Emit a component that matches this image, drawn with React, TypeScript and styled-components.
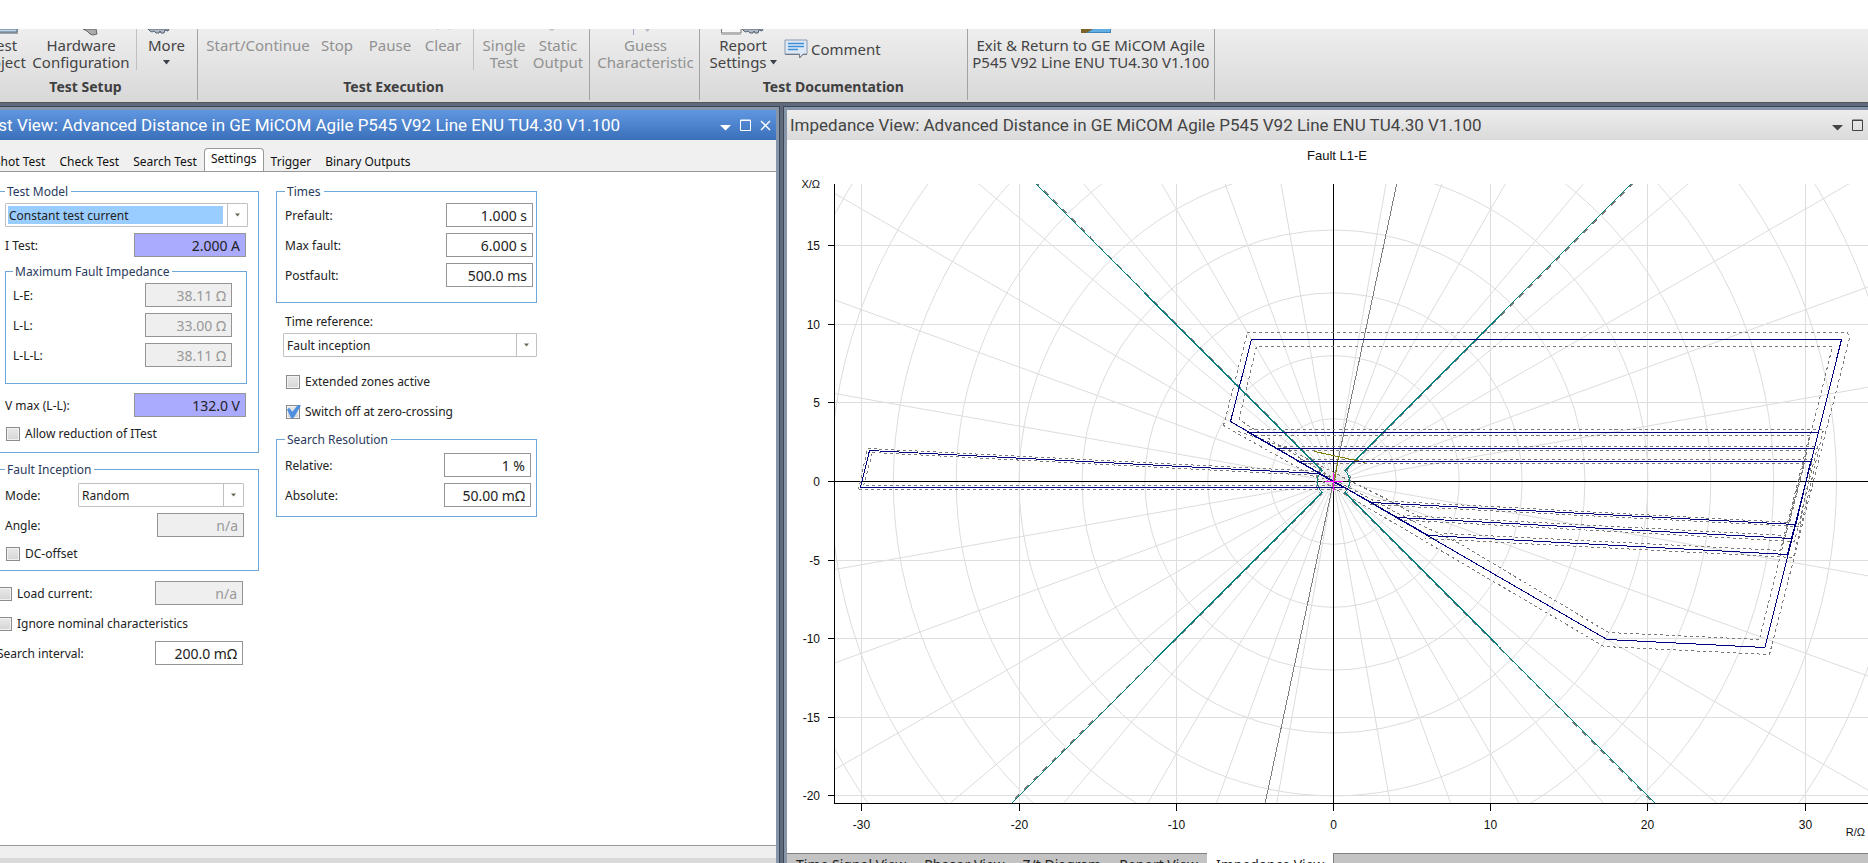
import React from "react";
import styled, { createGlobalStyle, css } from "styled-components";

const UI = `"Noto Sans", "Open Sans", sans-serif`;
const PLOT = `"Liberation Sans", Arial, sans-serif`;

const GlobalStyle = createGlobalStyle`
  *, *::before, *::after { box-sizing: border-box; }
  html, body { margin: 0; background: #fff; }
  body { overflow: hidden; font-family: ${UI}; color: #222; }
  button, input, select { font-family: inherit; color: inherit; margin: 0; }
`;

const Page = styled.div`
  display: flex;
  flex-direction: column;
  height: 100vh;
  padding-top: 29px;
  overflow: hidden;
`;

/* ---------- ribbon ---------- */

const Ribbon = styled.header`
  display: flex;
  flex: none;
  height: 74px;
  background: linear-gradient(#eeeeee, #d8d8d8);
  border-bottom: 1px solid #555555;
  overflow: hidden;
`;

const Group = styled.section<{ $shift?: number }>`
  display: flex;
  flex: none;
  flex-direction: column;
  height: 71px;
  margin-left: ${(p) => p.$shift ?? 0}px;
  border-right: 1px solid #a2a2a2;
`;

const GroupItems = styled.div<{ $pad?: string }>`
  display: flex;
  height: 42px;
  padding: ${(p) => p.$pad ?? "0"};
`;

const GroupTitle = styled.h2`
  margin: 6px 0 0;
  font-size: 14px;
  line-height: 20px;
  font-weight: 700;
  text-align: center;
  color: #404040;
`;

const Tool = styled.button<{ $w: number }>`
  display: flex;
  flex: none;
  flex-direction: column;
  align-items: center;
  width: ${(p) => p.$w}px;
  padding: 0;
  border: 0;
  background: none;
  font-size: 15px;
  line-height: 17px;
  white-space: nowrap;
  color: #444;
  &:disabled { color: #919191; }
`;

const ToolIcon = styled.svg`
  display: block;
  flex: none;
  width: 44px;
  height: 8px;
`;

const ToolLine = styled.span`
  display: flex;
  align-items: center;
  gap: 3px;
  height: 17px;
`;

const CommentTool = styled.button`
  display: flex;
  align-self: flex-start;
  align-items: center;
  gap: 3px;
  height: 20px;
  margin: 10px 0 0 8px;
  padding: 0;
  border: 0;
  background: none;
  font-size: 15px;
  line-height: 18px;
  color: #444;
`;

const Separator = styled.span`
  flex: none;
  width: 1px;
  height: 41px;
  margin: 0 2px 0 6px;
  background: #c0c0c0;
`;

const Caret = () => (
  <svg width="7" height="5" viewBox="0 0 7 5">
    <path d="M0 0H7L3.5 4.5Z" fill="#3a3f4c" />
  </svg>
);

/* ---------- panels ---------- */

const Workspace = styled.main`
  display: grid;
  flex: 1;
  min-height: 0;
  grid-template-columns: minmax(0, 780fr) minmax(0, 1085fr);
  gap: 3px;
  padding-top: 3px;
  background: #5f6b7d;
`;

const Panel = styled.section<{ $side: "left" | "right" }>`
  display: flex;
  flex-direction: column;
  min-width: 0;
  min-height: 0;
  border-top: 1px solid #3c4657;
  ${(p) =>
    p.$side === "left"
      ? css`
          border-right: 1px solid #3c4657;
          padding: 3px 3px 0 0;
        `
      : css`
          border-left: 1px solid #3c4657;
          padding: 3px 0 0 3px;
        `}
  background: #8795a9;
`;

const TitleBar = styled.div<{ $active?: boolean }>`
  display: flex;
  flex: none;
  align-items: center;
  justify-content: space-between;
  height: 30px;
  overflow: hidden;
  color: ${(p) => (p.$active ? "#fff" : "#444")};
  background: ${(p) =>
    p.$active ? "linear-gradient(#6197e1, #3a70b9)" : "linear-gradient(#ededed, #dadada)"};
`;

const Title = styled.h1<{ $start: number }>`
  flex: none;
  margin: 0 0 0 ${(p) => p.$start}px;
  font-family: Roboto, "Open Sans", sans-serif;
  font-size: 17px;
  line-height: 32px;
  font-weight: 400;
  white-space: nowrap;
`;

const WindowButtons = styled.div<{ $end: number }>`
  display: flex;
  gap: 7px;
  padding-right: ${(p) => p.$end}px;
`;

const WindowButton = styled.button`
  display: flex;
  width: 13px;
  padding: 0;
  border: 0;
  background: none;
`;

const MenuGlyph = () => (
  <svg width="13" height="13" viewBox="0 0 13 13">
    <path d="M1 6H12L6.500 11.500Z" fill="currentColor" />
  </svg>
);
const MaximizeGlyph = () => (
  <svg width="13" height="13" viewBox="0 0 13 13">
    <path d="M1.500 1H11.500V11.500H1.500Z" fill="none" stroke="currentColor" />
    <path d="M1 1.500H12" stroke="currentColor" />
  </svg>
);
const CloseGlyph = () => (
  <svg width="13" height="13" viewBox="0 0 13 13">
    <path d="M2 2L11 11M11 2L2 11" stroke="currentColor" strokeWidth="1.400" />
  </svg>
);

/* ---------- test view ---------- */

const TabStrip = styled.nav`
  display: flex;
  flex: none;
  align-items: flex-end;
  height: 32px;
  overflow: hidden;
  background: #f0f0f0;
  border-bottom: 1px solid #999;
`;

const Tab = styled.button<{ $selected?: boolean; $shift?: number }>`
  flex: none;
  height: ${(p) => (p.$selected ? 24 : 20)}px;
  margin: 0 0 ${(p) => (p.$selected ? -1 : 0)}px ${(p) => p.$shift ?? 0}px;
  padding: 0 6px ${(p) => (p.$selected ? 3 : 0)}px;
  border: 1px solid ${(p) => (p.$selected ? "#999" : "transparent")};
  border-bottom: 0;
  border-radius: 4px 4px 0 0;
  background: ${(p) => (p.$selected ? "#fff" : "none")};
  font-size: 12px;
  line-height: 18px;
  white-space: nowrap;
  color: #111;
`;

const Form = styled.form`
  display: flex;
  flex: 1;
  min-height: 0;
  align-items: flex-start;
  gap: 17px;
  padding-top: 11px;
  overflow: hidden;
  background: #fff;
  font-size: 12px;
  line-height: 16px;
`;

const Column = styled.div<{ $w: number; $shift?: number }>`
  flex: none;
  width: ${(p) => p.$w}px;
  margin-left: ${(p) => p.$shift ?? 0}px;
`;

const Box = styled.fieldset<{ $pad: string; $top?: number; $end?: number }>`
  display: flex;
  flex-direction: column;
  gap: 6px;
  min-width: 0;
  margin: ${(p) => p.$top ?? 0}px ${(p) => p.$end ?? 0}px 0 0;
  padding: ${(p) => p.$pad};
  border: 1px solid #6fa8d8;
`;

const Legend = styled.legend`
  height: 16px;
  padding: 1px 3px 0 2px;
  color: #2a3a5c;
`;

const Stack = styled.div<{ $pad: string }>`
  display: flex;
  flex-direction: column;
  gap: 6px;
  padding: ${(p) => p.$pad};
`;

const Row = styled.div<{ $end?: number; $top?: number; $h?: number }>`
  display: flex;
  flex: none;
  align-items: center;
  justify-content: space-between;
  height: ${(p) => p.$h ?? 24}px;
  margin-top: ${(p) => p.$top ?? 0}px;
  padding-right: ${(p) => p.$end ?? 0}px;
  white-space: nowrap;
  label { padding-top: 1px; }
`;

const Value = styled.input<{ $w?: number; $hot?: boolean }>`
  width: ${(p) => p.$w ?? 87}px;
  height: 24px;
  padding: 0 5px;
  border: 1px solid #959595;
  border-radius: 0;
  background: ${(p) => (p.$hot ? "#aaaaff" : "#fff")};
  font-size: 14px;
  text-align: right;
  &:disabled { background: #efefef; color: #999; opacity: 1; }
`;

const Check = styled.label`
  display: flex;
  align-items: center;
  gap: 5px;
  padding-left: 1px;
`;

const Tick = styled.input`
  appearance: none;
  display: grid;
  width: 14px;
  height: 14px;
  border: 1px solid #8c8c8c;
  background: linear-gradient(#e9e9e9, #d5d5d5);
  box-shadow: inset 0 0 0 1px #f2f2f2;
  &:checked::after {
    content: "";
    width: 14px;
    height: 14px;
    margin-top: -1px;
    background: #4f8fe0;
    clip-path: polygon(0 36%, 16% 24%, 38% 52%, 80% 0, 100% 8%, 46% 98%, 30% 98%);
  }
`;

const Picker = styled.span<{ $w: string }>`
  display: grid;
  grid-template-columns: minmax(0, 1fr) 21px;
  width: ${(p) => p.$w};
  height: 24px;
`;

const PickerField = styled.select<{ $lit?: boolean }>`
  appearance: none;
  grid-area: 1 / 1 / 2 / 3;
  height: 24px;
  padding: 0 24px 0 3px;
  border: 1px solid #c0c0c0;
  border-radius: 1px;
  background: ${(p) =>
    p.$lit
      ? "linear-gradient(#99ccff, #99ccff) 2px 2px / calc(100% - 26px) 18px no-repeat #fff"
      : "#fff"};
  font-size: 12px;
  color: #222;
`;

const PickerArrow = styled.svg`
  grid-area: 1 / 2 / 2 / 3;
  width: 21px;
  height: 24px;
  pointer-events: none;
`;

const FooterBar = styled.div`
  flex: none;
  height: 18px;
  border-top: 1px solid #999;
  background: linear-gradient(#efefef 12px, #dadada 12px);
`;

function ValueRow(p: {
  id: string; label: string; value: string; end?: number; top?: number;
  width?: number; hot?: boolean; off?: boolean;
}) {
  return (
    <Row $end={p.end} $top={p.top}>
      <label htmlFor={p.id}>{p.label}</label>
      <Value id={p.id} defaultValue={p.value} disabled={p.off} $w={p.width} $hot={p.hot} />
    </Row>
  );
}

function Choice(p: { id: string; value: string; width: string; lit?: boolean }) {
  return (
    <Picker $w={p.width}>
      <PickerField id={p.id} $lit={p.lit} aria-label={p.value}>
        <option>{p.value}</option>
      </PickerField>
      <PickerArrow viewBox="0 0 21 24">
        <path d="M0.500 0V24" stroke="#c0c0c0" />
        <path d="M8 10.500H13L10.500 13.500Z" fill="#6b6654" />
      </PickerArrow>
    </Picker>
  );
}

function TestView() {
  return (
    <Panel $side="left">
      <TitleBar $active>
        <Title $start={-20}>
          Test View: Advanced Distance in GE MiCOM Agile P545 V92 Line ENU TU4.30 V1.100
        </Title>
        <WindowButtons $end={4}>
          <WindowButton aria-label="Menu"><MenuGlyph /></WindowButton>
          <WindowButton aria-label="Maximize"><MaximizeGlyph /></WindowButton>
          <WindowButton aria-label="Close"><CloseGlyph /></WindowButton>
        </WindowButtons>
      </TitleBar>
      <TabStrip>
        <Tab $shift={-13}>Shot Test</Tab>
        <Tab>Check Test</Tab>
        <Tab>Search Test</Tab>
        <Tab $selected>Settings</Tab>
        <Tab>Trigger</Tab>
        <Tab>Binary Outputs</Tab>
      </TabStrip>
      <Form>
        <Column $w={267} $shift={-8}>
          <Box $pad="4px 10px 9px 12px">
            <Legend>Test Model</Legend>
            <Choice id="model" value="Constant test current" width="100%" lit />
            <ValueRow id="itest" label="I Test:" value="2.000 A" width={112} end={2} hot />
            <Box $pad="4px 14px 16px 7px" $end={1}>
              <Legend>Maximum Fault Impedance</Legend>
              <ValueRow id="le" label="L-E:" value="38.11 Ω" off />
              <ValueRow id="ll" label="L-L:" value="33.00 Ω" off />
              <ValueRow id="lll" label="L-L-L:" value="38.11 Ω" off />
            </Box>
            <ValueRow id="vmax" label="V max (L-L):" value="132.0 V" width={112} end={2} top={3} hot />
            <Row $h={20}>
              <Check><Tick type="checkbox" />Allow reduction of ITest</Check>
            </Row>
          </Box>
          <Box $pad="6px 14px 7px 12px" $top={8}>
            <Legend>Fault Inception</Legend>
            <Row>
              <label htmlFor="mode">Mode:</label>
              <Choice id="mode" value="Random" width="166px" />
            </Row>
            <ValueRow id="angle" label="Angle:" value="n/a" off />
            <Row $h={20}>
              <Check><Tick type="checkbox" />DC-offset</Check>
            </Row>
          </Box>
          <Stack $pad="10px 16px 0 5px">
            <Row>
              <Check><Tick type="checkbox" />Load current:</Check>
              <Value aria-label="Load current" defaultValue="n/a" disabled $w={88} />
            </Row>
            <Row>
              <Check><Tick type="checkbox" />Ignore nominal characteristics</Check>
            </Row>
            <ValueRow id="interval" label="Search interval:" value="200.0 mΩ" width={88} />
          </Stack>
        </Column>
        <Column $w={261}>
          <Box $pad="4px 3px 15px 8px">
            <Legend>Times</Legend>
            <ValueRow id="pre" label="Prefault:" value="1.000 s" />
            <ValueRow id="max" label="Max fault:" value="6.000 s" />
            <ValueRow id="post" label="Postfault:" value="500.0 ms" />
          </Box>
          <Stack $pad="11px 0 0 9px">
            <label htmlFor="ref">Time reference:</label>
          </Stack>
          <Stack $pad="3px 0 0 7px">
            <Choice id="ref" value="Fault inception" width="100%" />
          </Stack>
          <Stack $pad="12px 0 0 9px">
            <Row>
              <Check><Tick type="checkbox" />Extended zones active</Check>
            </Row>
            <Row>
              <Check><Tick type="checkbox" defaultChecked />Switch off at zero-crossing</Check>
            </Row>
          </Stack>
          <Box $pad="6px 5px 9px 8px" $top={8}>
            <Legend>Search Resolution</Legend>
            <ValueRow id="rel" label="Relative:" value="1 %" />
            <ValueRow id="abs" label="Absolute:" value="50.00 mΩ" />
          </Box>
        </Column>
      </Form>
      <FooterBar />
    </Panel>
  );
}

/* ---------- impedance plot ---------- */

const PlotArea = styled.div`
  display: flex;
  flex: 1;
  min-height: 0;
  overflow: hidden;
  background: #fff;
`;

const PlotSvg = styled.svg`
  flex: 1;
  min-width: 0;
  height: 100%;
  font-family: ${PLOT};
  font-size: 12px;
  fill: none;
  text { fill: #111; stroke: none; }
`;

const Crisp = styled.g`
  shape-rendering: crispEdges;
`;

const Dashed = styled.g`
  stroke: #7a7a7a;
  stroke-dasharray: 3 3;
`;

/* Origin of the R/X plane and pixels per ohm, in plot coordinates. */
const OX = 546.5;
const OY = 341.5;
const S = 15.72;
const px = (r: number) => Math.floor(OX + r * S) + 0.5;
const py = (x: number) => Math.floor(OY - x * S) + 0.5;
const LEFT = 47.5;
const TOP = 44;
const BOTTOM = 663.5;

const rays = Array.from({ length: 36 }, (_, i) => (i * 10 * Math.PI) / 180);
const rings = [4, 8, 12, 16, 20, 24, 28, 32, 36, 40];

/* Zone outlines, in pixels relative to the origin. */
const zones = [
  "-82,-142 508,-142 431.500,166 273.500,158 -103,-60",
  "-85,-49 485,-49 454,73 95,54",
  "-57,-33 481,-33 458,57 64,36",
  "-35,-20 477,-20 462.500,43 38,21",
  "-464,-31 -15,-8 10,6 -473,6",
];

const tolerances = [
  "-110,-56 -86,-149 514,-149 516,-143 436,173 270.500,165 12,13 -110,-56",
  "-94.500,-62 -77,-135 499,-135 426,158 275,151 126,62 72,36 8,2 -60,-40 -94.500,-62",
  "-91,-52 490,-52 460,76 92,57",
  "-79,-46 476,-46 447,69 110,52",
  "-62,-35 484,-35 461,60 61,38",
  "-52,-31 474,-31 452,54 70,34",
  "-40,-22 479,-22 466,45 35,23",
  "-30,-18 471,-18 456,41 44,19",
  "-475,8 -466,-33 -13,-10 14,8 -475,8",
  "-461,-29 -17,-6 4,4 -470,4 -461,-29",
  "-95,-50 -48,-34 10,-4 52,17 96,41",
];

function ImpedancePlot() {
  return (
    <PlotSvg role="img" aria-label="Impedance plane, fault L1-E">
      <defs>
        <clipPath id="plane">
          <rect x={LEFT} y={TOP} width="100%" height={BOTTOM - TOP} />
        </clipPath>
      </defs>
      <g clipPath="url(#plane)">
        <g stroke="#dcdcdc">
          {rings.map((r) => <circle key={r} cx={OX} cy={OY} r={r * S} />)}
          {rays.map((a) => (
            <line key={a} x1={OX} y1={OY} x2={OX + 800 * Math.cos(a)} y2={OY - 800 * Math.sin(a)} />
          ))}
        </g>
        <Crisp stroke="#dedede">
          {[-30, -20, -10, 10, 20, 30].map((r) => (
            <line key={r} x1={px(r)} x2={px(r)} y1={TOP} y2={BOTTOM} />
          ))}
          {[15, 10, 5, -5, -10, -15, -20].map((x) => (
            <line key={x} x1={LEFT} x2="100%" y1={py(x)} y2={py(x)} />
          ))}
        </Crisp>
        <Crisp stroke="#000">
          <line x1={LEFT} x2="100%" y1={OY} y2={OY} />
          <line x1={OX} x2={OX} y1={TOP} y2={BOTTOM} />
        </Crisp>
        <g transform={`translate(${OX} ${OY})`}>
          <Crisp>
            <path d="M85 -400L-85 400" stroke="#7f7f7f" />
            <Dashed>
              {tolerances.map((p) => <polyline key={p} points={p} />)}
              <path
                d="M401 -400L12 -11M-400 -401L-12 -12M-401 400L-12 12M400 401L12 12"
                strokeWidth="2"
                strokeDasharray="6 7"
              />
              <path d="M13 -12Q22 0 13 12M-13 -12Q-22 0 -13 12" />
            </Dashed>
            <g stroke="#008080">
              <path d="M400 -400L11.500 -11Q21 0 11.500 11L400 400" />
              <path d="M-400 -400L-11.500 -11Q-21 0 -11.500 11L-400 400" />
            </g>
            <path d="M-19 -30L32 -19M5 -24L1 0" stroke="#808000" />
            <g stroke="#000080">
              {zones.map((p) => <polygon key={p} points={p} />)}
            </g>
            <path d="M-9 0H9M0 -9V9" stroke="#ff00ff" />
          </Crisp>
        </g>
      </g>
      <Crisp stroke="#000">
        <line x1={LEFT} x2={LEFT} y1={TOP} y2={BOTTOM} />
        <line x1={LEFT} x2="100%" y1={BOTTOM} y2={BOTTOM} />
        {[15, 10, 5, 0, -5, -10, -15, -20].map((x) => (
          <line key={x} x1={LEFT - 7} x2={LEFT} y1={py(x)} y2={py(x)} />
        ))}
        {[-30, -20, -10, 0, 10, 20, 30].map((r) => (
          <line key={r} x1={px(r)} x2={px(r)} y1={BOTTOM} y2={BOTTOM + 7} />
        ))}
      </Crisp>
      <text x="550" y="20" fontSize="13" textAnchor="middle">Fault L1-E</text>
      <text x="33" y="48" fontSize="11" textAnchor="end">X/Ω</text>
      {[15, 10, 5, 0, -5, -10, -15, -20].map((x) => (
        <text key={x} x="33" y={py(x) + 4} textAnchor="end">{x}</text>
      ))}
      {[-30, -20, -10, 0, 10, 20, 30].map((r) => (
        <text key={r} x={px(r)} y="689" textAnchor="middle">{r}</text>
      ))}
      <text x="1078" y="696" fontSize="11" textAnchor="end">R/Ω</text>
    </PlotSvg>
  );
}

const ViewTabs = styled.nav`
  display: flex;
  flex: none;
  height: 10px;
  overflow: hidden;
  background: #c3c3c3;
`;

const ViewTab = styled.button<{ $selected?: boolean }>`
  flex: none;
  height: 22px;
  padding: 0 9px;
  border: 0;
  border-top: 1px solid ${(p) => (p.$selected ? "#fff" : "#808080")};
  background: ${(p) => (p.$selected ? "#fff" : "#c3c3c3")};
  font-size: 14px;
  line-height: 18px;
  white-space: nowrap;
  color: #222;
`;

const ViewTabsRest = styled.span`
  flex: 1;
  height: 22px;
  border-top: 1px solid #808080;
  border-left: 1px solid #808080;
`;

const ImpedanceView = () => (
  <Panel $side="right">
    <TitleBar>
      <Title $start={3}>
        Impedance View: Advanced Distance in GE MiCOM Agile P545 V92 Line ENU TU4.30 V1.100
      </Title>
      <WindowButtons $end={4}>
        <WindowButton aria-label="Menu"><MenuGlyph /></WindowButton>
        <WindowButton aria-label="Maximize"><MaximizeGlyph /></WindowButton>
      </WindowButtons>
    </TitleBar>
    <PlotArea><ImpedancePlot /></PlotArea>
    <ViewTabs>
      <ViewTab>Time Signal View</ViewTab>
      <ViewTab>Phasor View</ViewTab>
      <ViewTab>Z/t Diagram</ViewTab>
      <ViewTab>Report View</ViewTab>
      <ViewTab $selected>Impedance View</ViewTab>
      <ViewTabsRest />
    </ViewTabs>
  </Panel>
);

const GearEdge = ({ x }: { x: number }) => (
  <path
    transform={`translate(${x} 0)`}
    d="M0 0H21L20 2L17 1L16 4H13L12 2L11 4H8L6 2L4 3L2 2Z"
    fill="#aeb9c6"
    stroke="#56606e"
  />
);

export default function App() {
  return (
    <Page>
      <GlobalStyle />
      <Ribbon>
        <Group $shift={-26}>
          <GroupItems $pad="0 3px 0 0">
            <Tool $w={58}>
              <ToolIcon><path d="M0 0H37V5H0Z" fill="#9fa4aa" /><path d="M0 0H36V3H0Z" fill="#c3d6e6" stroke="#56718c" /></ToolIcon>
              <ToolLine>Test</ToolLine>
              <ToolLine>Object</ToolLine>
            </Tool>
            <Tool $w={98}>
              <ToolIcon><path d="M24 0H37L38 5L34 6L31 5L28 2Z" fill="#aaa" stroke="#666" /></ToolIcon>
              <ToolLine>Hardware</ToolLine>
              <ToolLine>Configuration</ToolLine>
            </Tool>
            <Separator />
            <Tool $w={55}>
              <ToolIcon><GearEdge x={3} /></ToolIcon>
              <ToolLine>More</ToolLine>
              <ToolLine><Caret /></ToolLine>
            </Tool>
          </GroupItems>
          <GroupTitle>Test Setup</GroupTitle>
        </Group>
        <Group>
          <GroupItems $pad="0 5px">
            <Tool $w={110} disabled><ToolIcon /><ToolLine>Start/Continue</ToolLine></Tool>
            <Tool $w={48} disabled><ToolIcon /><ToolLine>Stop</ToolLine></Tool>
            <Tool $w={58} disabled><ToolIcon /><ToolLine>Pause</ToolLine></Tool>
            <Tool $w={48} disabled><ToolIcon><path d="M14 0H18L17 1ZM26 0H30L29 1Z" fill="#d2d2d2" /></ToolIcon><ToolLine>Clear</ToolLine></Tool>
            <Separator />
            <Tool $w={56} disabled><ToolIcon /><ToolLine>Single</ToolLine><ToolLine>Test</ToolLine></Tool>
            <Tool $w={52} disabled><ToolIcon><path d="M12 0H19L16 2Z" fill="#c4c4c4" /></ToolIcon><ToolLine>Static</ToolLine><ToolLine>Output</ToolLine></Tool>
          </GroupItems>
          <GroupTitle>Test Execution</GroupTitle>
        </Group>
        <Group>
          <GroupItems $pad="0 0 0 2px">
            <Tool $w={107} disabled>
              <ToolIcon><path d="M9.500 0V6" stroke="#98a8c0" /><path d="M21 0H26L23.500 3Z" fill="#b4bcc8" /></ToolIcon>
              <ToolLine>Guess</ToolLine>
              <ToolLine>Characteristic</ToolLine>
            </Tool>
          </GroupItems>
        </Group>
        <Group>
          <GroupItems $pad="0 86px 0 10px">
            <Tool $w={66}>
              <ToolIcon><path d="M0 5H20V6H0Z" fill="#bbb" /><path d="M0.500 0V4H20V0" fill="#fafafa" stroke="#777" /><GearEdge x={21} /></ToolIcon>
              <ToolLine>Report</ToolLine>
              <ToolLine>Settings <Caret /></ToolLine>
            </Tool>
            <CommentTool>
              <svg width="24" height="20" viewBox="0 0 24 20">
                <path d="M1 1H23V15H19L15.500 19V15H1Z" fill="#dce8f6" stroke="#8a98ac" />
                <path d="M1 15.500H15.500V19L19 15.500H23" fill="none" stroke="#707a88" />
                <path d="M4 4.500H20M4 7.500H20M4 10.500H14" stroke="#3f8fd6" strokeWidth="1.500" />
              </svg>
              Comment
            </CommentTool>
          </GroupItems>
          <GroupTitle>Test Documentation</GroupTitle>
        </Group>
        <Group>
          <GroupItems>
            <Tool $w={246}>
              <ToolIcon><path d="M12 0H42V4H12Z" fill="#3f86bf" /><path d="M24 0H41V3H19Z" fill="#62ade2" /><path d="M12 0H24L17 4H12Z" fill="#7a6428" /></ToolIcon>
              <ToolLine>Exit &amp; Return to GE MiCOM Agile</ToolLine>
              <ToolLine>P545 V92 Line ENU TU4.30 V1.100</ToolLine>
            </Tool>
          </GroupItems>
        </Group>
      </Ribbon>
      <Workspace>
        <TestView />
        <ImpedanceView />
      </Workspace>
    </Page>
  );
}
